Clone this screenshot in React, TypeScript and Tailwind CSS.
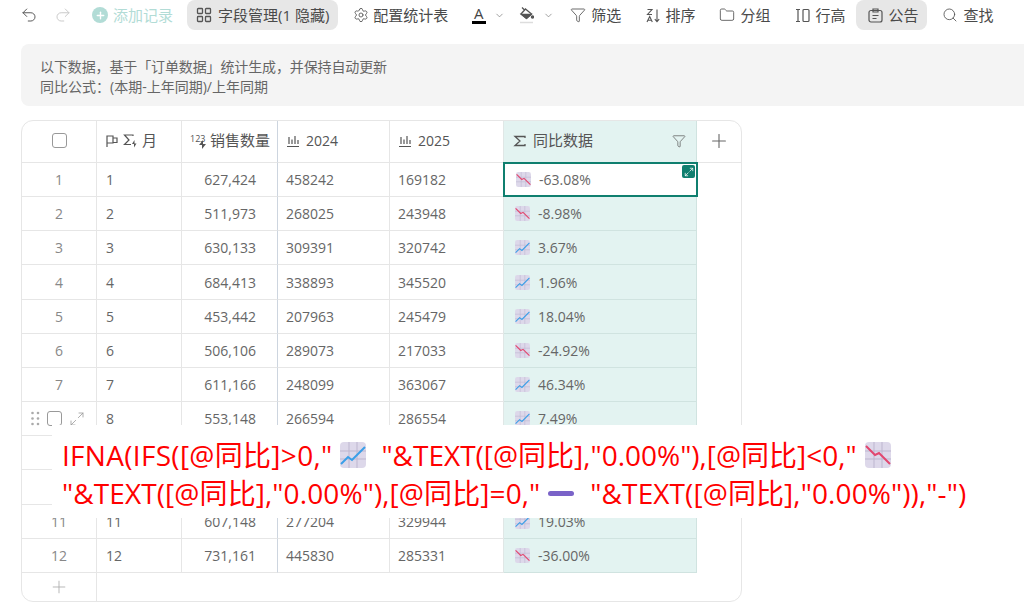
import React from "react";
import { Undo2, Redo2, Plus, Settings, ChevronDown, Funnel, Folder, Search, Maximize2 } from "lucide-react";

const ic = "#555";

function Trend({ up, size = 15 }: { up: boolean; size?: number }) {
  return (
    <svg width={size} height={size} viewBox="0 0 26 26" className="inline-block shrink-0">
      <rect width="26" height="26" rx="4" fill="#ddd8ea" />
      <path d="M0 9H26M0 17H26M9 0V26M17 0V26" stroke="#bdb6cf" strokeWidth="1" fill="none" />
      {up ? (
        <path d="M1 22L8 15L12 18L25 5" stroke="#3a9fe8" strokeWidth="2" fill="none" />
      ) : (
        <path d="M1 4L10 13L14 11L25 22" stroke="#e2476f" strokeWidth="2" fill="none" />
      )}
    </svg>
  );
}

function FieldChart() {
  return (
    <svg width="14" height="14" viewBox="0 0 14 14" fill="none" stroke={ic} strokeWidth="1.2">
      <path d="M1 12.5H13M3 3V10M6 5.5V10M9 2V10M12 6V10" />
    </svg>
  );
}

function SigmaBolt() {
  return (
    <svg width="15" height="15" viewBox="0 0 15 15" fill="none" stroke={ic} strokeWidth="1.2">
      <path d="M10 3V2H1.5L6 7L1.5 11.5H8" />
      <path d="M11.5 7L9 11H11V14.5L13.5 10.5H11.5Z" fill={ic} stroke="none" />
    </svg>
  );
}

function Tool({ icon, label, ml, active, pad, gap }: { icon: React.ReactNode; label: string; ml: string; active?: boolean; pad?: string; gap?: string }) {
  return (
    <div className={`${ml} ${pad ?? ""} ${gap ?? "gap-[5px]"} flex h-[30px] shrink-0 items-center rounded-lg ${active ? "bg-[#e7e7e7]" : ""}`}>
      {icon}
      <span className="whitespace-nowrap">{label}</span>
    </div>
  );
}

const rows: [number, string, string, string, string, boolean][] = [
  [1, "627,424", "458242", "169182", "-63.08%", false],
  [2, "511,973", "268025", "243948", "-8.98%", false],
  [3, "630,133", "309391", "320742", "3.67%", true],
  [4, "684,413", "338893", "345520", "1.96%", true],
  [5, "453,442", "207963", "245479", "18.04%", true],
  [6, "506,106", "289073", "217033", "-24.92%", false],
  [7, "611,166", "248099", "363067", "46.34%", true],
  [8, "553,148", "266594", "286554", "7.49%", true],
  [9, "", "", "", "", true],
  [10, "", "", "", "", true],
  [11, "607,148", "277204", "329944", "19.03%", true],
  [12, "731,161", "445830", "285331", "-36.00%", false],
];

const cell = "flex items-center border-b border-r border-[#e6e6e6]";
const headCell = "flex items-center border-b border-r border-[#e6e6e6] gap-[6px] pb-[2px] text-[15px] text-[#555]";

export default function App() {
  return (
    <div className="relative h-[602px] w-[1024px] overflow-hidden bg-white font-['Open_Sans','Noto_Sans_CJK_SC',sans-serif] text-[#666]">
      {/* toolbar */}
      <div className="flex h-[30px] items-center text-[15px] text-[#4a4a4a]">
        <Undo2 size={18} strokeWidth={1.3} color="#555" className="ml-[20px] shrink-0" />
        <Redo2 size={18} strokeWidth={1.3} color="#c8c8c8" className="ml-[16px] shrink-0" />
        <div className="ml-[20px] flex size-[16px] shrink-0 items-center justify-center rounded-full bg-[#b2dcd6]">
          <Plus size={11} strokeWidth={3} color="#fff" />
        </div>
        <span className="ml-[5px] whitespace-nowrap text-[#b2dcd6]">添加记录</span>
        <Tool
          ml="ml-[14px]"
          pad="px-[9px]"
          gap="gap-[6px]"
          active
          label="字段管理(1 隐藏)"
          icon={
            <svg width="16" height="16" viewBox="0 0 16 16" fill="none" stroke={ic} strokeWidth="1.3">
              <rect x="1.5" y="1.5" width="5" height="5" rx="0.8" />
              <rect x="9.5" y="1.5" width="5" height="5" rx="0.8" />
              <rect x="1.5" y="9.5" width="5" height="5" rx="0.8" />
              <rect x="9.5" y="9.5" width="5" height="5" rx="0.8" />
            </svg>
          }
        />
        <Tool ml="ml-[15px]" gap="gap-[4px]" label="配置统计表" icon={<Settings size={16} strokeWidth={1.3} color={ic} />} />
        <div className="ml-[23px] flex w-[15px] shrink-0 flex-col items-center leading-[14px]">
          <span className="text-[15px] text-[#444]">A</span>
          <span className="mt-[1px] h-[3px] w-[14px] bg-black" />
        </div>
        <ChevronDown size={11} strokeWidth={1.5} color="#777" className="ml-[8px] shrink-0" />
        <svg width="15" height="18" viewBox="0 0 15 18" fill="none" stroke={ic} strokeWidth="1.3" className="ml-[14px] shrink-0">
          <path d="M3 1.5L6 4.5M6.5 3L12.5 8L7.5 12.5L2 8Z" />
          <path d="M2.5 8.5H12L7.5 12.5Z" fill={ic} />
          <circle cx="13.5" cy="11" r="1.1" fill={ic} />
          <path d="M1 16.5H14" stroke="#ddd" strokeWidth="1.5" />
        </svg>
        <ChevronDown size={11} strokeWidth={1.5} color="#777" className="ml-[9px] shrink-0" />
        <Tool ml="ml-[17px]" label="筛选" icon={<Funnel size={16} strokeWidth={1.3} color={ic} className="-ml-[1px]" />} />
        <Tool
          ml="ml-[25px]"
          label="排序"
          icon={
            <svg width="14" height="15" viewBox="0 0 14 15" fill="none" stroke={ic} strokeWidth="1.1">
              <path d="M1.5 1.5H6L1.5 6.5H6M1 14L3.7 8.5L6.3 14M2 12.2H5.4M11 1.5V13.5M8.8 11.2L11 13.7L13.2 11.2" />
            </svg>
          }
        />
        <Tool ml="ml-[24px]" label="分组" icon={<Folder size={16} strokeWidth={1.3} color={ic} />} />
        <Tool
          ml="ml-[25px]"
          label="行高"
          icon={
            <svg width="15" height="15" viewBox="0 0 15 15" fill="none" stroke={ic} strokeWidth="1.2">
              <path d="M1 1.5H5M1 13.5H5M3 1.5V13.5" />
              <rect x="8" y="1.5" width="6" height="12" rx="1" />
            </svg>
          }
        />
        <Tool
          ml="ml-[11px]"
          pad="pl-[12px] pr-[9px]"
          active
          label="公告"
          icon={
            <svg width="15" height="15" viewBox="0 0 15 15" fill="none" stroke={ic} strokeWidth="1.2">
              <rect x="1" y="2.5" width="13" height="11.5" rx="2" />
              <path d="M5 1H10V4H5ZM4.5 7.5H10.5M4.5 10.5H8.5" />
            </svg>
          }
        />
        <Tool ml="ml-[15px]" label="查找" icon={<Search size={16} strokeWidth={1.3} color={ic} />} />
      </div>

      {/* announcement */}
      <div className="ml-[21px] mt-[14px] h-[62px] w-[1020px] rounded-lg bg-[#f4f4f4] pl-[19px] pt-[13px] text-[14px] leading-[20px] text-[#666]">
        <div className="tracking-[-0.12px]">以下数据，基于「订单数据」统计生成，并保持自动更新</div>
        <div>同比公式：(本期-上年同期)/上年同期</div>
      </div>

      {/* table */}
      <div className="ml-[21px] mt-[14px] grid w-[721px] grid-cols-[75px_85px_96px_112px_114px_193px_44px] grid-rows-[42px_repeat(12,34.17px)_28px] rounded-xl border border-[#e6e6e6] text-[14px]">
        <div className={`${headCell} justify-center rounded-tl-xl`}>
          <span className="size-[15px] rounded-[3px] border-[1.5px] border-[#999]" />
        </div>
        <div className={`${headCell} pl-[8px] !gap-[4px]`}>
          <svg width="14" height="14" viewBox="0 0 14 14" fill="none" stroke={ic} strokeWidth="1.2">
            <path d="M2 13V2H8V9H2M8 4H12V8.5H8" />
          </svg>
          <SigmaBolt />
          <span>月</span>
        </div>
        <div className={`${headCell} !border-r-[#cdd5df] pl-[8px] !gap-[5px]`}>
          <span className="relative w-[15px] text-[9px] leading-[9px] text-[#555] -mt-[4px]">
            123
            <svg width="7" height="9" viewBox="0 0 7 9" className="absolute left-[9px] top-[6px]">
              <path d="M4 0L0 5H3V9L7 4H4Z" fill={ic} />
            </svg>
          </span>
          <span className="whitespace-nowrap">销售数量</span>
        </div>
        <div className={`${headCell} pl-[8px]`}>
          <FieldChart />
          <span className="text-[14px]">2024</span>
        </div>
        <div className={`${headCell} !border-r-[#e0e7e6] pl-[8px]`}>
          <FieldChart />
          <span className="text-[14px]">2025</span>
        </div>
        <div className={`${headCell} !border-b-[#d0e3e0] !border-r-[#d0e3e0] bg-[#e3f3f1] pl-[9px] pr-[10px]`}>
          <svg width="14" height="14" viewBox="0 0 14 14" fill="none" stroke={ic} strokeWidth="1.3">
            <path d="M12 4V2.5H2L7 7L2 11.5H12V10" />
          </svg>
          <span className="flex-1">同比数据</span>
          <Funnel size={14} strokeWidth={1.2} color={ic} />
        </div>
        <div className="flex items-center justify-center border-b border-[#e6e6e6] pb-[2px]">
          <Plus size={22} strokeWidth={1.2} color="#666" />
        </div>

        {rows.map(([n, qty, y24, y25, pct, up]) => {
          const blank = n === 9 || n === 10;
          return (
            <React.Fragment key={n}>
              {n === 8 ? (
                <div className={`${cell} gap-[7px] pl-[9px]`}>
                  <svg width="9" height="15" viewBox="0 0 9 15" fill="#aaa">
                    <circle cx="1.5" cy="2" r="1.3" />
                    <circle cx="7" cy="2" r="1.3" />
                    <circle cx="1.5" cy="7.5" r="1.3" />
                    <circle cx="7" cy="7.5" r="1.3" />
                    <circle cx="1.5" cy="13" r="1.3" />
                    <circle cx="7" cy="13" r="1.3" />
                  </svg>
                  <span className="size-[15px] rounded-[3px] border-[1.5px] border-[#999]" />
                  <Maximize2 size={16} strokeWidth={1.2} color="#999" />
                </div>
              ) : (
                <div className={`${cell} justify-center text-[#888]`}>{blank ? "" : n}</div>
              )}
              <div className={`${cell} pl-[9px]`}>{blank ? "" : n}</div>
              <div className={`${cell} !border-r-[#cdd5df] justify-end pr-[21px]`}>{qty}</div>
              <div className={`${cell} pl-[8px]`}>{y24}</div>
              <div className={`${cell} !border-r-[#e0e7e6] pl-[8px]`}>{y25}</div>
              {n === 1 ? (
                <div className="relative -ml-px -mr-px -mt-px flex items-center gap-[8px] border-2 border-[#0f7f6f] bg-white pl-[11px]">
                  <Trend up={up} />
                  <span>{pct}</span>
                  <span className="absolute right-[1px] top-[1px] flex size-[13px] items-center justify-center rounded-[2px] bg-[#0f7f6f]">
                    <Maximize2 size={10} strokeWidth={1.8} color="#fff" />
                  </span>
                </div>
              ) : (
                <div className={`${cell} gap-[8px] !border-b-[#d0e3e0] !border-r-[#d0e3e0] bg-[#e3f3f1] pl-[11px]`}>
                  {pct && <Trend up={up} />}
                  <span>{pct}</span>
                </div>
              )}
              <div />
            </React.Fragment>
          );
        })}

        <div className="flex items-center justify-center border-r border-[#e6e6e6]">
          <Plus size={20} strokeWidth={1} color="#aaa" />
        </div>
        <div className="col-span-6" />
      </div>

      {/* formula annotation */}
      <div className="absolute left-[52px] top-[425px] h-[93px] w-[930px] whitespace-nowrap bg-white pl-[10px] pt-[11px] text-[28px] leading-[38px] text-[#ff0000]">
        <div className="flex items-center">
          <span className="tracking-[0.3px]">IFNA(IFS([@同比]&gt;0,"</span>
          <span className="ml-[8px] flex"><Trend up size={26} /></span>
          <span className="ml-[15px]">"&amp;TEXT([@同比],"0.00%"),[@同比]&lt;0,"</span>
          <span className="ml-[8px] flex"><Trend up={false} size={26} /></span>
        </div>
        <div className="flex items-center">
          <span className="tracking-[0.1px]">"&amp;TEXT([@同比],"0.00%"),[@同比]=0,"</span>
          <span className="ml-[8px] h-[5px] w-[26px] rounded-full bg-[#7a63c8]" />
          <span className="ml-[16px] tracking-[0.1px]">"&amp;TEXT([@同比],"0.00%")),"-")</span>
        </div>
      </div>
    </div>
  );
}
